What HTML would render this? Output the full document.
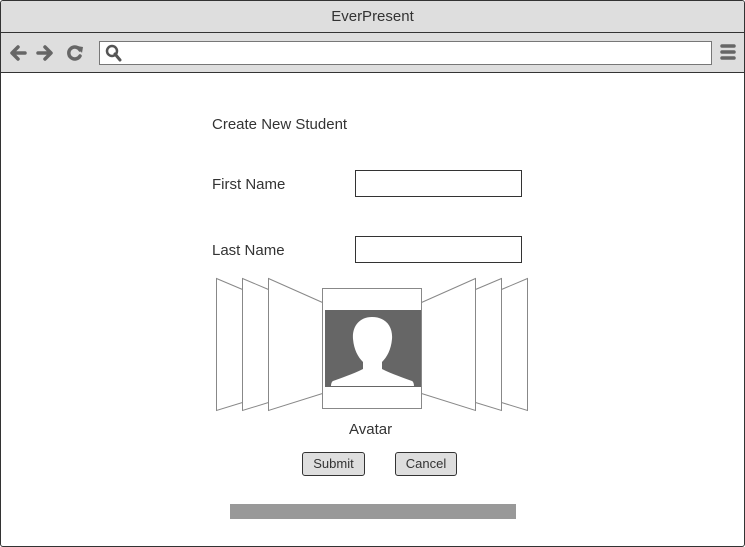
<!DOCTYPE html>
<html><head><style>
body{margin:0;width:745px;height:547px;overflow:hidden;font-family:"Liberation Sans",sans-serif;background:#fff}
.frame{position:absolute;left:0;top:0;width:743px;height:545px;border:1px solid #333;border-radius:3px;overflow:hidden}
.title{position:absolute;left:0;top:0;width:743px;height:31px;background:#dedede;border-bottom:1px solid #333;text-align:center;line-height:31px;font-size:15px;color:#333}
.bar{position:absolute;left:0;top:32px;width:743px;height:39px;background:#dedede;border-bottom:1px solid #333}
.url{position:absolute;left:98px;top:8px;width:611px;height:22px;background:#fff;border:1px solid #777}
.t{position:absolute;font-size:15px;color:#333}
.in{position:absolute;width:165px;height:25px;border:1px solid #333;background:#fff}
.btn{position:absolute;height:22px;border:1px solid #333;border-radius:3px;background:#dedede;font-size:13px;color:#333;text-align:center;line-height:22px}
</style></head><body>
<div class="frame">
<div class="title">EverPresent</div>
<div class="bar">
<svg width="100" height="39" style="position:absolute;left:0;top:0">
<g stroke="#666" stroke-width="3.5" fill="none" stroke-linecap="round" stroke-linejoin="round">
<path d="M24 20H12M17 14l-6 6 6 6"/>
<path d="M37 20h12M44 14l6 6-6 6"/>
<path d="M79 17a6 6 0 1 0 0 6"/>
</g>
<path d="M76 13l6 1-1 6z" fill="#666"/>
</svg>
<div class="url"><svg width="20" height="20" style="position:absolute;left:4px;top:1px"><circle cx="8" cy="8" r="5" stroke="#555" stroke-width="2.5" fill="none"/><path d="M11 11l5 6" stroke="#555" stroke-width="3" stroke-linecap="round"/></svg></div>
<svg width="20" height="20" style="position:absolute;left:718px;top:10px"><g stroke="#666" stroke-width="3.5" stroke-linecap="round"><path d="M3 3h12M3 9h12M3 15h12"/></g></svg>
</div>
<div class="t" style="left:211px;top:115px">Create New Student</div>
<div class="t" style="left:211px;top:175px">First Name</div>
<div class="in" style="left:354px;top:169px"></div>
<div class="t" style="left:211px;top:241px">Last Name</div>
<div class="in" style="left:354px;top:235px"></div>
<svg width="745" height="547" style="position:absolute;left:-1px;top:-1px" fill="#fff" stroke="#888" stroke-width="1">
<path d="M216.5 278.5L242.5 289.5V402.5L216.5 410.5Z"/>
<path d="M242.5 278.5L268.5 289.5V402.5L242.5 410.5Z"/>
<path d="M268.5 278.5L322.5 302.5V393.5L268.5 410.5Z"/>
<path d="M527.5 278.5L501.5 289.5V402.5L527.5 410.5Z"/>
<path d="M501.5 278.5L475.5 289.5V402.5L501.5 410.5Z"/>
<path d="M475.5 278.5L421.5 302.5V393.5L475.5 410.5Z"/>
<rect x="322.5" y="288.5" width="99" height="120"/>
<rect x="325" y="310" width="96" height="77" fill="#666" stroke="none"/>
<path d="M372 317c-13 0-20 10-19 22 1 11 5 18 10 23v7c-10 5-22 9-30 12-2 1-2 5-2 5h83s0-4-2-5c-8-3-20-7-30-12v-7c5-5 9-12 10-23 1-12-6-22-20-22z" fill="#fff" stroke="none"/>
<rect x="230" y="504" width="286" height="15" fill="#999" stroke="none"/>
</svg>
<div class="t" style="left:348px;top:420px">Avatar</div>
<div class="btn" style="left:301px;top:451px;width:61px">Submit</div>
<div class="btn" style="left:394px;top:451px;width:60px">Cancel</div>
</div>
</body></html>
